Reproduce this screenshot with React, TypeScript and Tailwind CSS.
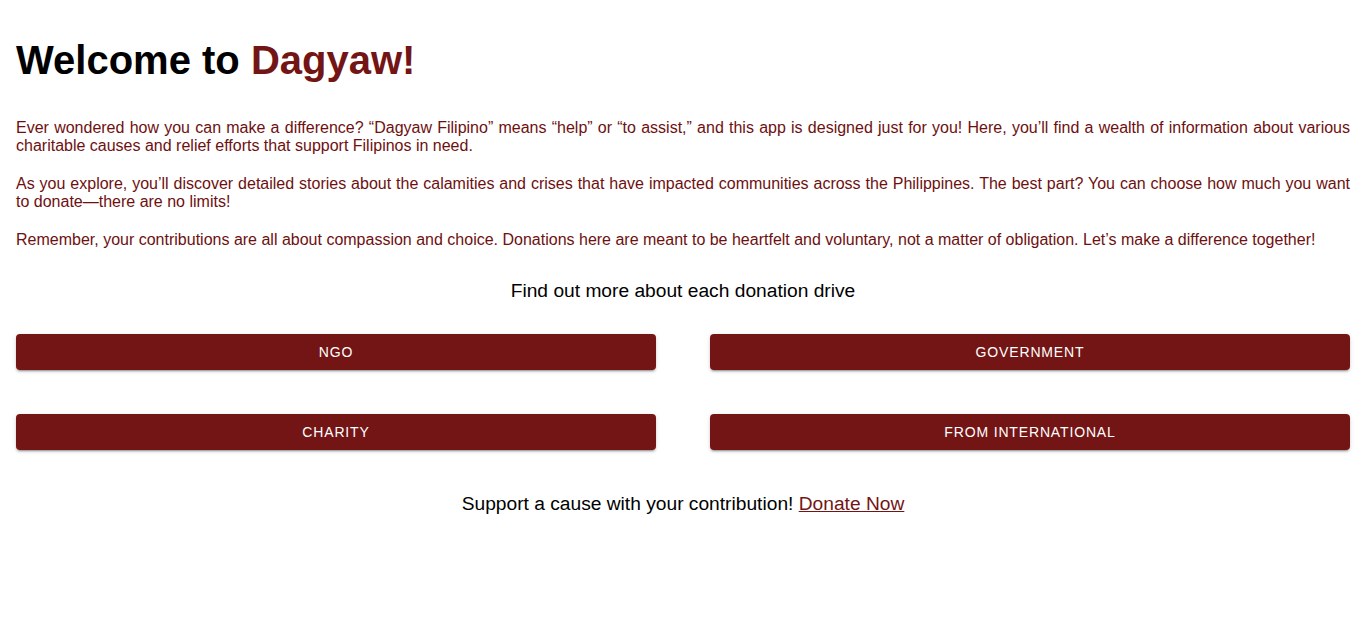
import React from "react";

const btnShadow =
  "shadow-[0px_3px_1px_-2px_rgba(0,0,0,0.2),0px_2px_2px_0px_rgba(0,0,0,0.14),0px_1px_5px_0px_rgba(0,0,0,0.12)]";

function DriveButton({ label }: { label: string }) {
  return (
    <button
      className={`h-9 w-full rounded bg-[#731515] px-4 py-[6px] text-[14px] font-normal uppercase leading-[24px] tracking-[0.85px] text-white ${btnShadow}`}
      style={{ fontFamily: "'Liberation Sans', Arial, sans-serif" }}
    >
      {label}
    </button>
  );
}

export default function App() {
  return (
    <div
      className="min-h-[640px] bg-white px-4 pt-4 pb-10 text-black"
      style={{ fontFamily: "'Liberation Sans', Arial, sans-serif" }}
    >
      <h1 className="mt-[21px] text-[40px] font-bold leading-[46px]">
        Welcome to <span className="text-[#731515]">Dagyaw!</span>
      </h1>

      <div className="mt-[36px] text-justify text-[16px] leading-[18px] text-[#6e1010]">
        <p>
          Ever wondered how you can make a difference? “Dagyaw Filipino” means “help” or “to assist,” and this app is
          designed just for you! Here, you’ll find a wealth of information about various charitable causes and relief
          efforts that support Filipinos in need.
        </p>
        <p className="mt-5">
          As you explore, you’ll discover detailed stories about the calamities and crises that have impacted
          communities across the Philippines. The best part? You can choose how much you want to donate—there are no
          limits!
        </p>
        <p className="mt-5">
          Remember, your contributions are all about compassion and choice. Donations here are meant to be heartfelt and
          voluntary, not a matter of obligation. Let’s make a difference together!
        </p>
      </div>

      <p className="mt-[31px] text-center text-[19.2px] leading-[22px]">Find out more about each donation drive</p>

      <div className="mt-[32px] grid grid-cols-2 gap-x-[54px] gap-y-[44px]">
        <DriveButton label="NGO" />
        <DriveButton label="Government" />
        <DriveButton label="Charity" />
        <DriveButton label="From International" />
      </div>

      <p className="mt-[43px] text-center text-[19.2px] leading-[22px]">
        Support a cause with your contribution!{" "}
        <a href="#" className="text-[#731515] underline">
          Donate Now
        </a>
      </p>
    </div>
  );
}
